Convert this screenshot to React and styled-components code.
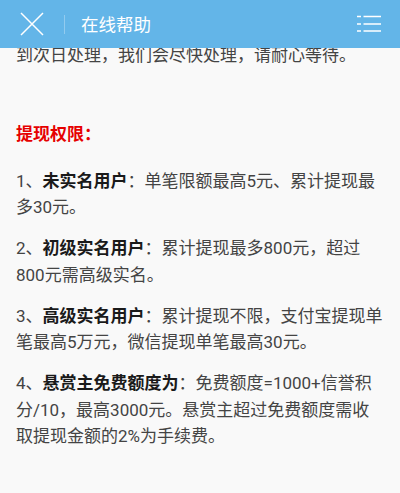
import React from "react"
import styled, { createGlobalStyle } from "styled-components"

const GlobalStyle = createGlobalStyle`
  html, body {
    margin: 0;
    padding: 0;
    background: #f9f9f9;
  }
  body {
    font-family: "Roboto", "Noto Sans CJK SC", sans-serif;
    -webkit-font-smoothing: antialiased;
  }
`

const Page = styled.div`
  width: 400px;
  height: 493px;
  overflow: hidden;
  background: #f9f9f9;
`

const TopBar = styled.header`
  position: fixed;
  top: 0;
  left: 0;
  right: 0;
  height: 48px;
  display: flex;
  align-items: center;
  background: #63b5e8;
  color: #fff;
  z-index: 10;
`

const IconButton = styled.button`
  display: flex;
  align-items: center;
  justify-content: center;
  width: ${ p => p.$w }px;
  height: 48px;
  padding: 0;
  margin: 0;
  border: 0;
  background: none;
  cursor: pointer;
`

const Divider = styled.span`
  width: 1px;
  height: 19px;
  margin: 0 16px 0 1px;
  background: rgba(255, 255, 255, 0.3);
`

const Title = styled.h1`
  flex: 1;
  margin: 0;
  font-family: "Noto Sans CJK SC", sans-serif;
  font-size: 17.5px;
  font-weight: normal;
  letter-spacing: 0;
  line-height: 48px;
`

const Content = styled.main`
  padding: 41.75px 16px 0;
  font-size: 17px;
  line-height: 26.5px;
  color: #444;
`

const Para = styled.p`
  margin: 0 0 13.5px;
`

const Heading = styled.p`
  margin: 51.5px 0 20.5px;
  color: #e60000;
  font-weight: bold;
  font-family: "Noto Sans CJK SC", sans-serif;
`

const Strong = styled.b`
  color: #1a1a1a;
  font-family: "Noto Sans CJK SC", sans-serif;
  font-weight: bold;
`

const CloseIcon = () => (
  <svg width="24" height="24" viewBox="0 0 24 24">
    <path d="M1 1 L23 23 M23 1 L1 23" stroke="#fff" strokeWidth="1.5" fill="none" />
  </svg>
)

const ListIcon = () => (
  <svg width="24" height="18" viewBox="0 0 24 18">
    <g stroke="#fff" strokeWidth="1.6" fill="none">
      <path d="M0 1.5 H4 M0 9 H4 M0 16 H4" />
      <path d="M6.5 1.5 H24 M6.5 9 H24 M6.5 16 H24" />
    </g>
  </svg>
)

const rules = [
  { label: "未实名用户", text: "单笔限额最高5元、累计提现最多30元。" },
  { label: "初级实名用户", text: "累计提现最多800元，超过800元需高级实名。" },
  { label: "高级实名用户", text: "累计提现不限，支付宝提现单笔最高5万元，微信提现单笔最高30元。" },
  { label: "悬赏主免费额度为", text: "免费额度=1000+信誉积分/10，最高3000元。悬赏主超过免费额度需收取提现金额的2%为手续费。" },
]

export default function App() {
  return (
    <Page>
      <GlobalStyle />
      <TopBar>
        <IconButton $w={63} aria-label="关闭">
          <CloseIcon />
        </IconButton>
        <Divider />
        <Title>在线帮助</Title>
        <IconButton $w={62} aria-label="目录">
          <ListIcon />
        </IconButton>
      </TopBar>
      <Content>
        <Para>到次日处理，我们会尽快处理，请耐心等待。</Para>
        <Heading>提现权限：</Heading>
        {rules.map((r, i) => (
          <Para key={i}>
            {i + 1}、<Strong>{r.label}</Strong>：{r.text}
          </Para>
        ))}
      </Content>
    </Page>
  )
}
